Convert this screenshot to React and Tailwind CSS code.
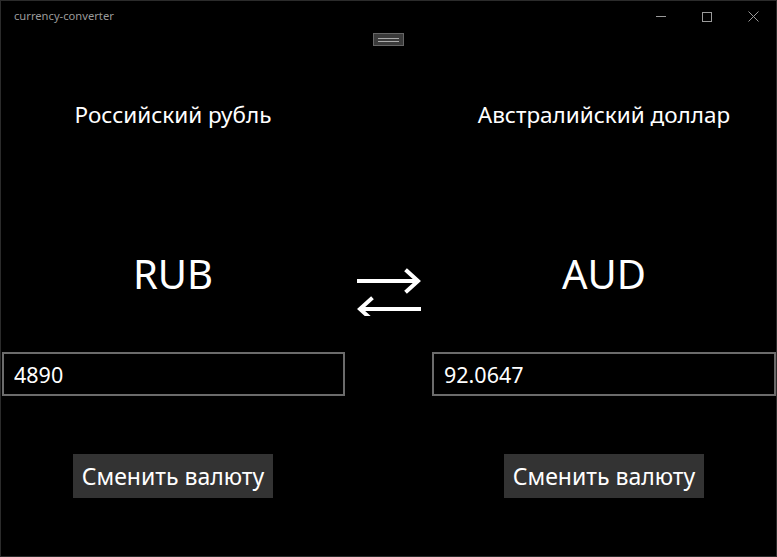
import React, { useState } from "react";

const font = { fontFamily: '"Noto Sans", "Open Sans", sans-serif' };

const SwapArrows = () => (
  <svg width="64" height="48" viewBox="0 0 64 48" fill="none" stroke="white" strokeWidth="4">
    <line x1="0" y1="13" x2="62" y2="13" />
    <polyline points="50,3 61,13 50,23" strokeLinecap="square" />
    <line x1="2" y1="41" x2="64" y2="41" />
    <polyline points="14,31 3,41 14,51" strokeLinecap="square" />
  </svg>
);

const WindowControls = () => (
  <div className="flex items-center h-full text-[#9a9a9a]">
    <div className="w-[46px] h-full flex items-center justify-center">
      <div className="w-[10px] h-px bg-[#9a9a9a]" />
    </div>
    <div className="w-[46px] h-full flex items-center justify-center">
      <div className="w-[10px] h-[10px] border border-[#9a9a9a]" />
    </div>
    <div className="w-[46px] h-full flex items-center justify-center">
      <svg width="11" height="11" viewBox="0 0 11 11" stroke="#9a9a9a" strokeWidth="1">
        <line x1="0.5" y1="0.5" x2="10.5" y2="10.5" />
        <line x1="10.5" y1="0.5" x2="0.5" y2="10.5" />
      </svg>
    </div>
  </div>
);

const App = () => {
  const [rub, setRub] = useState("4890");
  const [aud, setAud] = useState("92.0647");

  return (
    <div className="w-[777px] h-[557px] bg-black border border-[#2b2b2b] text-white overflow-hidden" style={font}>
      <div className="h-[31px] flex items-center justify-between">
        <span className="pl-[13px] text-[11.2px] text-[#9a9a9a]">currency-converter</span>
        <WindowControls />
      </div>
      <div className="h-[14px] flex justify-center">
        <div className="mt-[1px] w-[31px] h-[13px] bg-[#3a3a3a] border border-[#666] flex flex-col items-center justify-center gap-[2px]">
          <div className="w-[21px] h-px bg-[#aaa]" />
          <div className="w-[21px] h-px bg-[#aaa]" />
        </div>
      </div>

      <div className="grid grid-cols-[344px_87px_344px] grid-rows-[138px_168px_44px_58px_44px]">
        <div className="flex items-center justify-center text-[22.5px]">Российский рубль</div>
        <div />
        <div className="flex items-center justify-center text-[22.5px]">Австралийский доллар</div>

        <div className="flex justify-center text-[40px] leading-[56px] pt-[62px]">RUB</div>
        <div className="flex justify-center pt-[84px]">
          <SwapArrows />
        </div>
        <div className="flex justify-center text-[40px] leading-[56px] pt-[62px]">AUD</div>

        <div className="pl-px">
          <input
            value={rub}
            onChange={(e) => setRub(e.target.value)}
            className="w-full h-full bg-black border-2 border-[#6b6b6b] px-[10px] text-[21.5px] text-white outline-none"
          />
        </div>
        <div />
        <div>
          <input
            value={aud}
            onChange={(e) => setAud(e.target.value)}
            className="w-full h-full bg-black border-2 border-[#6b6b6b] px-[10px] text-[21.5px] text-white outline-none"
          />
        </div>

        <div />
        <div />
        <div />

        <div className="flex justify-center">
          <button className="h-full bg-[#333333] px-[9px] text-[23px] text-white">Сменить валюту</button>
        </div>
        <div />
        <div className="flex justify-center">
          <button className="h-full bg-[#333333] px-[9px] text-[23px] text-white">Сменить валюту</button>
        </div>
      </div>
    </div>
  );
};

export default App;
